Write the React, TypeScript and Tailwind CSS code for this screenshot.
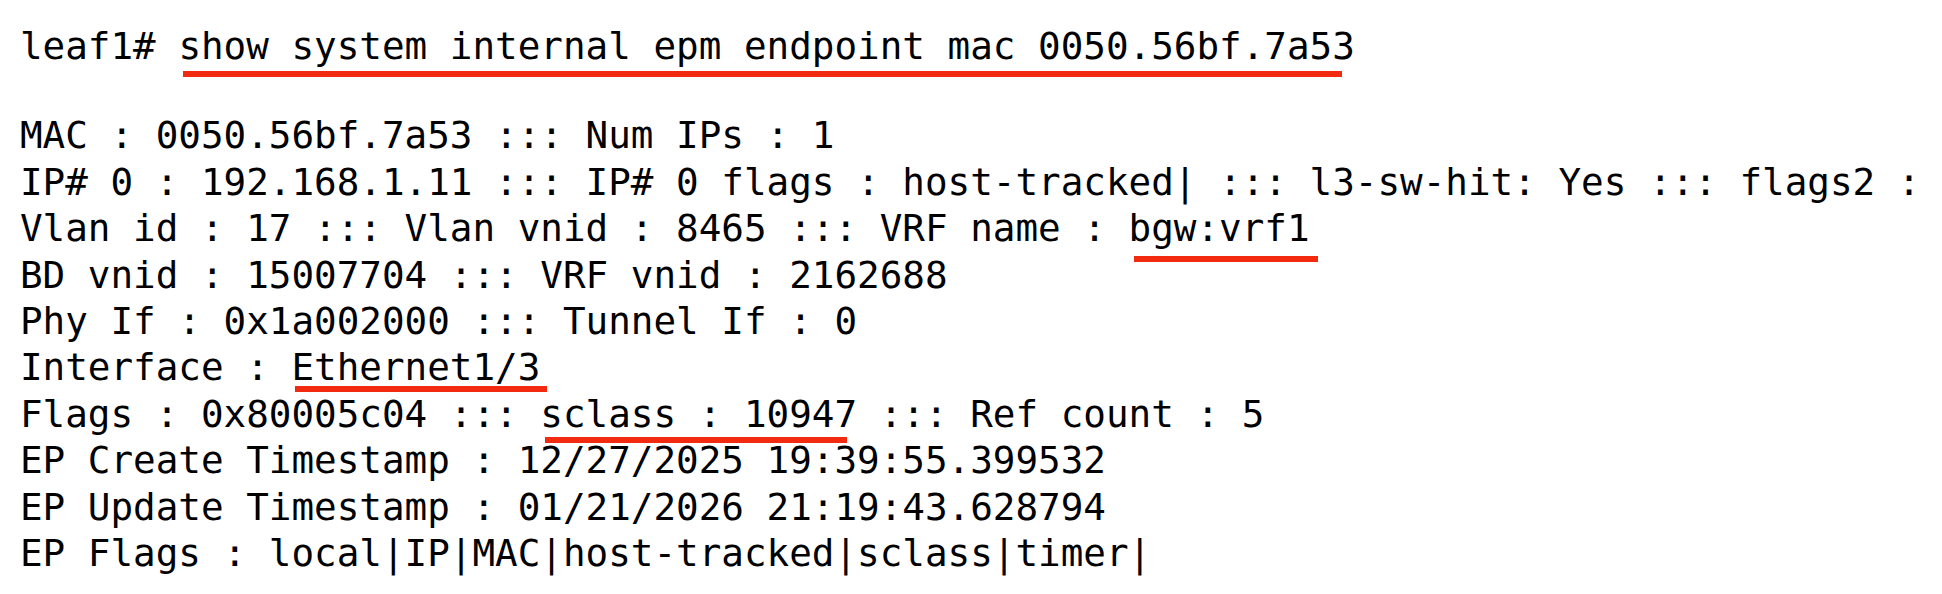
import React from "react";

function U({
  children,
  left,
  width,
  top,
}: {
  children: React.ReactNode;
  left: number;
  width: number;
  top: number;
}) {
  return (
    <span className="relative inline-block">
      {children}
      <span
        className="absolute h-[6px] bg-[#f22a10]"
        style={{ left: `${left}px`, width: `${width}px`, top: `${top}px` }}
      />
    </span>
  );
}

export default function App() {
  const font = {
    fontFamily: '"DejaVu Sans Mono", "Liberation Mono", monospace',
  };
  return (
    <div
      className="w-[1942px] h-[594px] bg-white text-black overflow-hidden pl-[20px] pt-[23px] text-[37.6px] leading-[46.4px] whitespace-pre"
      style={font}
    >
      <div>
        {"leaf1# "}
        <U left={5} width={1159} top={48}>
          show system internal epm endpoint mac 0050.56bf.7a53
        </U>
      </div>
      <div className="mt-[43px]">
        <div>MAC : 0050.56bf.7a53 ::: Num IPs : 1</div>
        <div>
          IP# 0 : 192.168.1.11 ::: IP# 0 flags : host-tracked| ::: l3-sw-hit: Yes ::: flags2 :
        </div>
        <div>
          {"Vlan id : 17 ::: Vlan vnid : 8465 ::: VRF name : "}
          <U left={5} width={184} top={51}>
            bgw:vrf1
          </U>
        </div>
        <div>BD vnid : 15007704 ::: VRF vnid : 2162688</div>
        <div>Phy If : 0x1a002000 ::: Tunnel If : 0</div>
        <div>
          {"Interface : "}
          <U left={3} width={252} top={42}>
            Ethernet1/3
          </U>
        </div>
        <div>
          {"Flags : 0x80005c04 ::: "}
          <U left={5} width={302} top={46}>
            sclass : 10947
          </U>
          {" ::: Ref count : 5"}
        </div>
        <div>EP Create Timestamp : 12/27/2025 19:39:55.399532</div>
        <div>EP Update Timestamp : 01/21/2026 21:19:43.628794</div>
        <div>EP Flags : local|IP|MAC|host-tracked|sclass|timer|</div>
      </div>
    </div>
  );
}
